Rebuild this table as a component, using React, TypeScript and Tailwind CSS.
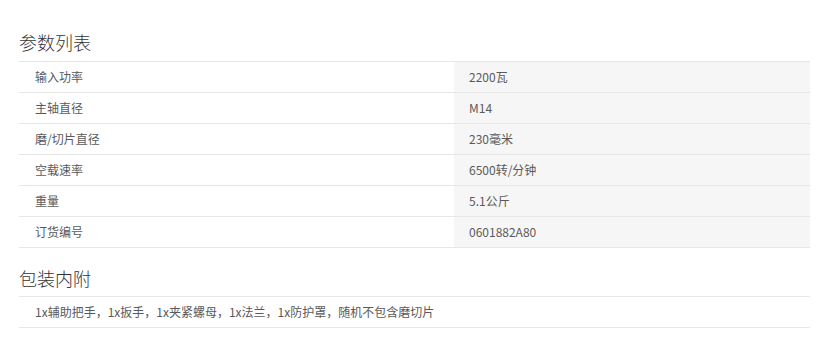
import React from 'react';

const specs: [string, string][] = [
  ['输入功率', '2200瓦'],
  ['主轴直径', 'M14'],
  ['磨/切片直径', '230毫米'],
  ['空载速率', '6500转/分钟'],
  ['重量', '5.1公斤'],
  ['订货编号', '0601882A80'],
];

const font = { fontFamily: '"Noto Sans CJK SC", "Liberation Sans", sans-serif' };

export default function App() {
  return (
    <div className="w-[833px] h-[349px] bg-white pl-[19px] pr-[23px]" style={font}>
      <h2 className="pt-[30px] pb-[7px] text-[18px] leading-[24px] text-[#333] font-light">参数列表</h2>
      <div className="border-b border-[#e6e6e6]">
        {specs.map(([label, value]) => (
          <div key={label} className="flex h-[31px] border-t border-[#e6e6e6] text-[12px] text-[#5a5a5a]">
            <div className="w-[435px] flex items-center pl-[16px]">{label}</div>
            <div className="flex-1 flex items-center pl-[15px] bg-[#f6f6f6]">{value}</div>
          </div>
        ))}
      </div>
      <h2 className="pt-[18px] pb-[6px] text-[18px] leading-[24px] text-[#333] font-light">包装内附</h2>
      <div className="flex h-[32px] items-center border-y border-[#e6e6e6] pl-[16px] text-[12px] text-[#5a5a5a]">
        1x辅助把手，1x扳手，1x夹紧螺母，1x法兰，1x防护罩，随机不包含磨切片
      </div>
    </div>
  );
}
